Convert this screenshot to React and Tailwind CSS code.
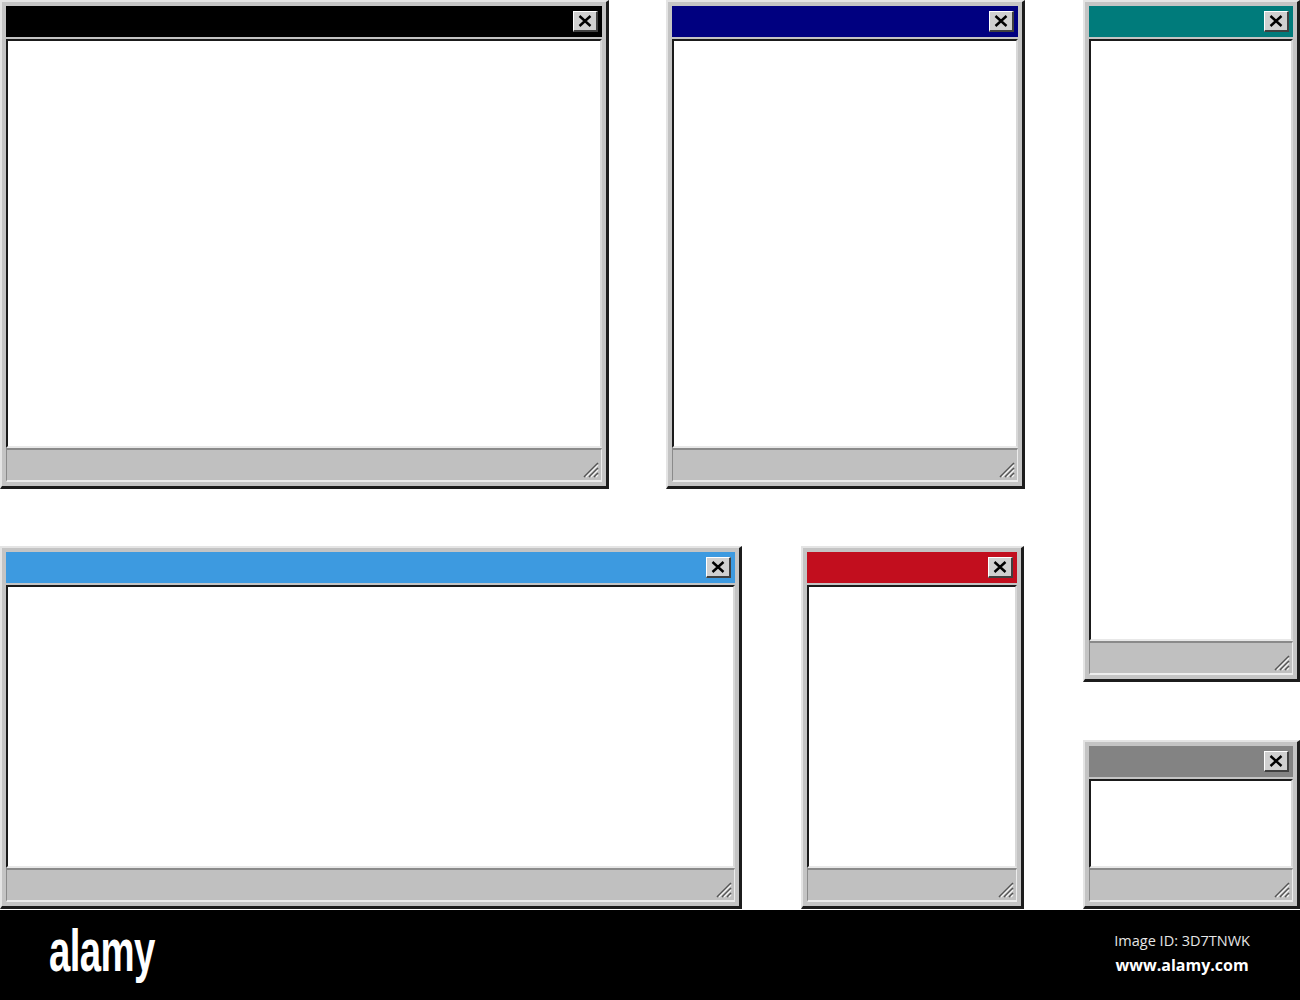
import React from "react";

// classic desktop windows scattered on a white canvas
const windows = [
  { left: 0, top: 0, width: 609, height: 489, bar: "bg-[#000000]" },
  { left: 666, top: 0, width: 359, height: 489, bar: "bg-[#000080]" },
  { left: 1083, top: 0, width: 217, height: 682, bar: "bg-[#007b7b]" },
  { left: 0, top: 546, width: 742, height: 363, bar: "bg-[#3d9ae0]" },
  { left: 801, top: 546, width: 223, height: 363, bar: "bg-[#c20e1e]" },
  { left: 1083, top: 740, width: 217, height: 169, bar: "bg-[#838383]" },
];

const CloseButton = () => (
  <div className="w-[25px] h-[21px] bg-[#d0d0d0] border-t border-l border-t-white border-l-white border-r-2 border-b-2 border-r-[#404040] border-b-[#404040] flex items-center justify-center">
    <svg width="14" height="12" viewBox="0 0 14 12">
      <path d="M1.5 1 L12.5 11 M12.5 1 L1.5 11" stroke="#000" strokeWidth="2.4" />
    </svg>
  </div>
);

const Grip = () => (
  <svg width="18" height="18" viewBox="0 0 18 18" className="absolute right-[2px] bottom-[2px]">
    <path d="M17 3 L3 17 M17 8 L8 17 M17 13 L13 17" stroke="#555" strokeWidth="1.6" />
    <path d="M17 5 L5 17 M17 10 L10 17 M17 15 L15 17" stroke="#f4f4f4" strokeWidth="1.2" />
  </svg>
);

const Window = ({ left, top, width, height, bar }) => (
  <div
    className="absolute flex flex-col bg-[#c4c4c4] border-t-2 border-l-2 border-t-[#e4e4e4] border-l-[#e4e4e4] border-r-[3px] border-b-[3px] border-r-[#1c1c1c] border-b-[#1c1c1c] p-1"
    style={{ left, top, width, height }}
  >
    <div className={`h-[31px] shrink-0 flex items-center justify-end pr-[4px] ${bar}`}>
      <CloseButton />
    </div>
    <div className="flex-1 mt-[2px] bg-white border-t-2 border-l-2 border-t-[#1a1a1a] border-l-[#1a1a1a] border-r-2 border-b-2 border-r-[#d8d8d8] border-b-[#e8e8e8]" />
    <div className="relative h-[34px] shrink-0 bg-[#c0c0c0] border-t-2 border-l border-t-[#8a8a8a] border-l-[#8a8a8a] border-b-2 border-r border-b-[#ececec] border-r-[#ececec]">
      <Grip />
    </div>
  </div>
);

export default function App() {
  return (
    <div className="w-[1300px] h-[1000px] bg-white flex flex-col overflow-hidden">
      <div className="relative h-[910px] shrink-0">
        {windows.map((w, i) => (
          <Window key={i} {...w} />
        ))}
      </div>
      <div className="flex-1 bg-black flex items-center justify-between pl-[49px] pr-[50px]">
        <span className="inline-block text-white font-bold text-[60px] leading-none tracking-[-1px] scale-x-[0.64] origin-left font-['Liberation_Sans',Arial,sans-serif] pb-[8px]">
          alamy
        </span>
        <div className="flex flex-col items-center text-white font-['Open_Sans','DejaVu_Sans',sans-serif] pb-[4px]">
          <span className="text-[14.5px] leading-[20px] text-[#e6e6e6]">Image ID: 3D7TNWK</span>
          <span className="text-[16px] leading-[22px] font-bold mt-[3px]">www.alamy.com</span>
        </div>
      </div>
    </div>
  );
}
